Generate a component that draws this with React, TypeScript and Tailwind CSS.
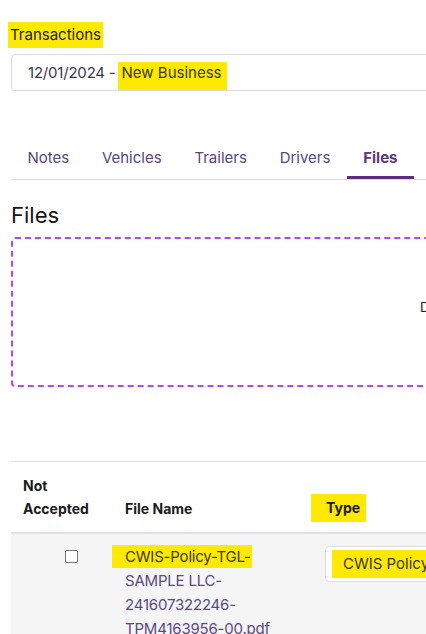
import React from "react";

const hl = "bg-[#ffe900]";

export default function App() {
  const tabs = ["Notes", "Vehicles", "Trailers", "Drivers", "Files"];
  return (
    <div className="w-[426px] h-[634px] overflow-hidden bg-white" style={{ fontFamily: "Inter, 'Noto Sans', sans-serif" }}>
      <div className="w-[1000px] pl-[11px]">
        {/* Transactions */}
        <div className="pt-[22px]">
          <span className={`${hl} inline-block -ml-[3px] px-[2px] h-[26px] leading-[26px] text-[15px] text-[#1e2124]`}>Transactions</span>
        </div>
        <div className="mt-[6px] h-[37px] border border-[#dcdde2] rounded-[4px] flex items-center pl-[16px] text-[15px] text-[#3b3752]">
          <span className="tracking-[-0.2px] leading-[22px]">12/01/2024 -</span>
          <span className={`${hl} ml-[2px] h-[28px] leading-[22px] pb-[6px] pl-[4px] pr-[5px] mt-[7px] text-[#3a3a1c]`}>New Business</span>
        </div>

        {/* Tabs */}
        <div className="mt-[48px] flex border-b border-[#dcdcdf] h-[41px] text-[15px]">
          {tabs.map((t) => {
            const active = t === "Files";
            return (
              <div
                key={t}
                className={`flex items-center px-[16.4px] h-full border-b-[3px] ${active ? "border-[#5e2f78] font-bold text-[#5a3b7a]" : "border-transparent text-[#59467a]"}`}
              >
                <span className="-mb-[1px]">{t}</span>
              </div>
            );
          })}
        </div>

        {/* Files heading */}
        <div className="mt-[21px] text-[22px] leading-[28px] text-[#161616]">Files</div>

        <div className="mt-[8px] h-[150px] w-[900px] border-2 border-dashed border-[#c23ff8] rounded-[4px] flex items-center pl-[407px]">
          <span className="text-[13px] text-[#222] mt-[-8px]">Drag and drop files here</span>
        </div>

        {/* Table */}
        <div className="mt-[74px] border-t border-[#e2e0e6] w-[900px]">
          <div className="flex border-b-2 border-[#e4dfe8] text-[14px] font-bold text-[#1b1b1b] leading-[23px]">
            <div className="w-[102px] px-[12px] pt-[12px] pb-[12px] flex items-end">
              <span>Not<br />Accepted</span>
            </div>
            <div className="w-[201px] px-[12px] pb-[12px] flex items-end">File Name</div>
            <div className="flex-1 pl-[12px] pb-[10px] flex items-end">
              <span className={`${hl} -ml-[15px] pl-[15px] pr-[6px] h-[28px] leading-[28px]`}>Type</span>
            </div>
          </div>
          <div className="flex bg-[#f5f5f5] text-[15px] leading-[24px] pb-[20px]">
            <div className="w-[102px] pt-[16px] pl-[54px]">
              <div className="w-[13px] h-[13px] border border-[#767676] rounded-[2px] bg-white" />
            </div>
            <div className="w-[201px] px-[12px] pt-[11px] text-[#5b4a82] tracking-[-0.2px]">
              <span className={`${hl} -ml-[13px] pl-[13px] pr-[1px] py-[2px] text-[#3d3a14]`}>CWIS-Policy-TGL-</span>
              <br />
              SAMPLE LLC-
              <br />
              241607322246-
              <br />
              TPM4163956-00.pdf
            </div>
            <div className="flex-1 pl-[11px] pt-[12px]">
              <div className="w-[300px] h-[36px] bg-white border border-[#dcdde2] rounded-[4px] flex items-center pl-[6px]">
                <span className={`${hl} h-[28px] leading-[28px] pl-[11px] pr-[20px] text-[#3a3a1c]`}>CWIS Policy</span>
              </div>
            </div>
          </div>
        </div>
      </div>
    </div>
  );
}
